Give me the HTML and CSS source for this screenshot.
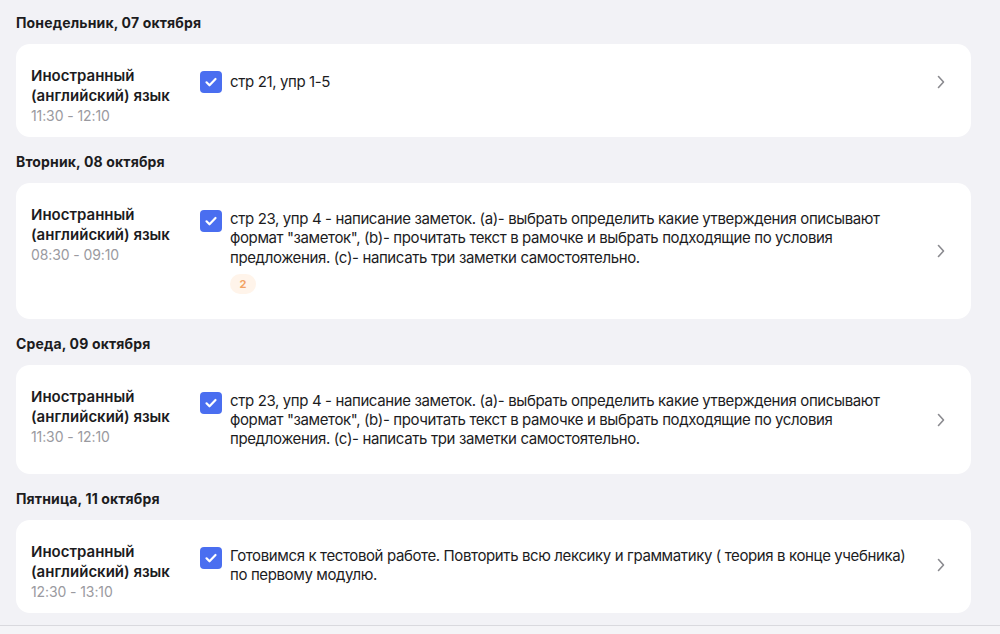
FILE: index.html
```html
<!DOCTYPE html>
<html lang="ru">
<head>
  <meta charset="UTF-8" />
  <meta name="viewport" content="width=device-width, initial-scale=1.0" />
  <title>Домашние задания</title>
  <link rel="stylesheet" href="styles.css">
</head>
<body>

<div class="lenta">

  <!-- Понедельник -->
  <h2 class="den">Понедельник, 07 октября</h2>
  <div class="kartochka">
    <div class="urok">
      <div class="predmet">Иностранный (английский) язык</div>
      <div class="vremya">11:30 - 12:10</div>
    </div>
    <div class="zadanie">
      <div class="stroka">
        <span class="galka">
          <svg viewBox="0 0 22 22" width="22" height="22"><path d="M6.5 11.3l3 3 6-6.3" fill="none" stroke="#fff" stroke-width="2.2" stroke-linecap="round" stroke-linejoin="round"/></svg>
        </span>
        <div class="tekst">
          <p>стр 21, упр 1-5</p>
        </div>
        <span class="strelka">
          <svg viewBox="0 0 8 14" width="8" height="14"><path d="M1.5 1.5l5 5.5-5 5.5" fill="none" stroke="#8a8a8f" stroke-width="1.6" stroke-linecap="round" stroke-linejoin="round"/></svg>
        </span>
      </div>
    </div>
  </div>

  <!-- Вторник -->
  <h2 class="den">Вторник, 08 октября</h2>
  <div class="kartochka">
    <div class="urok">
      <div class="predmet">Иностранный (английский) язык</div>
      <div class="vremya">08:30 - 09:10</div>
    </div>
    <div class="zadanie">
      <div class="stroka">
        <span class="galka">
          <svg viewBox="0 0 22 22" width="22" height="22"><path d="M6.5 11.3l3 3 6-6.3" fill="none" stroke="#fff" stroke-width="2.2" stroke-linecap="round" stroke-linejoin="round"/></svg>
        </span>
        <div class="tekst">
          <p>стр 23, упр 4 - написание заметок. (a)- выбрать определить какие утверждения описывают формат "заметок", (b)- прочитать текст в рамочке и выбрать подходящие по условия предложения. (c)- написать три заметки самостоятельно.</p>
          <span class="schetchik">2</span>
        </div>
        <span class="strelka">
          <svg viewBox="0 0 8 14" width="8" height="14"><path d="M1.5 1.5l5 5.5-5 5.5" fill="none" stroke="#8a8a8f" stroke-width="1.6" stroke-linecap="round" stroke-linejoin="round"/></svg>
        </span>
      </div>
    </div>
  </div>

  <!-- Среда -->
  <h2 class="den">Среда, 09 октября</h2>
  <div class="kartochka">
    <div class="urok">
      <div class="predmet">Иностранный (английский) язык</div>
      <div class="vremya">11:30 - 12:10</div>
    </div>
    <div class="zadanie">
      <div class="stroka">
        <span class="galka">
          <svg viewBox="0 0 22 22" width="22" height="22"><path d="M6.5 11.3l3 3 6-6.3" fill="none" stroke="#fff" stroke-width="2.2" stroke-linecap="round" stroke-linejoin="round"/></svg>
        </span>
        <div class="tekst">
          <p>стр 23, упр 4 - написание заметок. (a)- выбрать определить какие утверждения описывают формат "заметок", (b)- прочитать текст в рамочке и выбрать подходящие по условия предложения. (c)- написать три заметки самостоятельно.</p>
        </div>
        <span class="strelka">
          <svg viewBox="0 0 8 14" width="8" height="14"><path d="M1.5 1.5l5 5.5-5 5.5" fill="none" stroke="#8a8a8f" stroke-width="1.6" stroke-linecap="round" stroke-linejoin="round"/></svg>
        </span>
      </div>
    </div>
  </div>

  <!-- Пятница -->
  <h2 class="den">Пятница, 11 октября</h2>
  <div class="kartochka">
    <div class="urok">
      <div class="predmet">Иностранный (английский) язык</div>
      <div class="vremya">12:30 - 13:10</div>
    </div>
    <div class="zadanie">
      <div class="stroka">
        <span class="galka">
          <svg viewBox="0 0 22 22" width="22" height="22"><path d="M6.5 11.3l3 3 6-6.3" fill="none" stroke="#fff" stroke-width="2.2" stroke-linecap="round" stroke-linejoin="round"/></svg>
        </span>
        <div class="tekst">
          <p>Готовимся к тестовой работе. Повторить всю лексику и грамматику ( теория в конце учебника) по первому модулю.</p>
        </div>
        <span class="strelka">
          <svg viewBox="0 0 8 14" width="8" height="14"><path d="M1.5 1.5l5 5.5-5 5.5" fill="none" stroke="#8a8a8f" stroke-width="1.6" stroke-linecap="round" stroke-linejoin="round"/></svg>
        </span>
      </div>
    </div>
  </div>

</div>

<div class="podval"></div>

</body>
</html>
```

FILE: styles.css
```css
html, body {
  margin: 0;
  padding: 0;
  background: #f2f2f6;
  font-family: Inter, "Noto Sans", sans-serif;
  color: #1c1c1e;
}

.lenta {
  width: 955px;
  padding: 14px 0 12px 16px;
}

.den {
  margin: 16px 0 13px;
  font-size: 14px;
  line-height: 17px;
  font-weight: 700;
  letter-spacing: 0.15px;
}

.den:first-child {
  margin-top: 0;
}

.kartochka {
  display: flex;
  background: #fff;
  border-radius: 14px;
  padding: 22px 0 12px 15px;
}

.urok {
  width: 169px;
  flex-shrink: 0;
}

.predmet {
  font-size: 15px;
  line-height: 20px;
  font-weight: 600;
  width: 150px;
}

.vremya {
  margin-top: 1px;
  font-size: 14px;
  line-height: 18px;
  letter-spacing: -0.1px;
  color: #9a9aa0;
}

.zadanie {
  flex: 1;
  padding: 4px 0 13px;
}

.stroka {
  display: flex;
  align-items: center;
}

.galka {
  align-self: flex-start;
  width: 22px;
  height: 22px;
  border-radius: 4px;
  background: #4a6ef0;
  flex-shrink: 0;
  margin-top: 1px;
}

.galka svg {
  display: block;
}

.tekst {
  flex: 1;
  margin-left: 8px;
  padding-right: 8px;
}

.tekst p {
  margin: 0;
  font-size: 15px;
  line-height: 19.3px;
  letter-spacing: -0.38px;
}

.schetchik {
  display: inline-block;
  margin-top: 7px;
  width: 26px;
  height: 20px;
  line-height: 20px;
  border-radius: 10px;
  background: #fff4ea;
  color: #f2a263;
  font-size: 11px;
  font-weight: 700;
  text-align: center;
}

.strelka {
  width: 8px;
  margin: 0 26px 0 12px;
  flex-shrink: 0;
}

.strelka svg {
  display: block;
}

.podval {
  border-top: 1px solid #d9d9de;
  background: #f4f4f7;
  height: 20px;
}
```
